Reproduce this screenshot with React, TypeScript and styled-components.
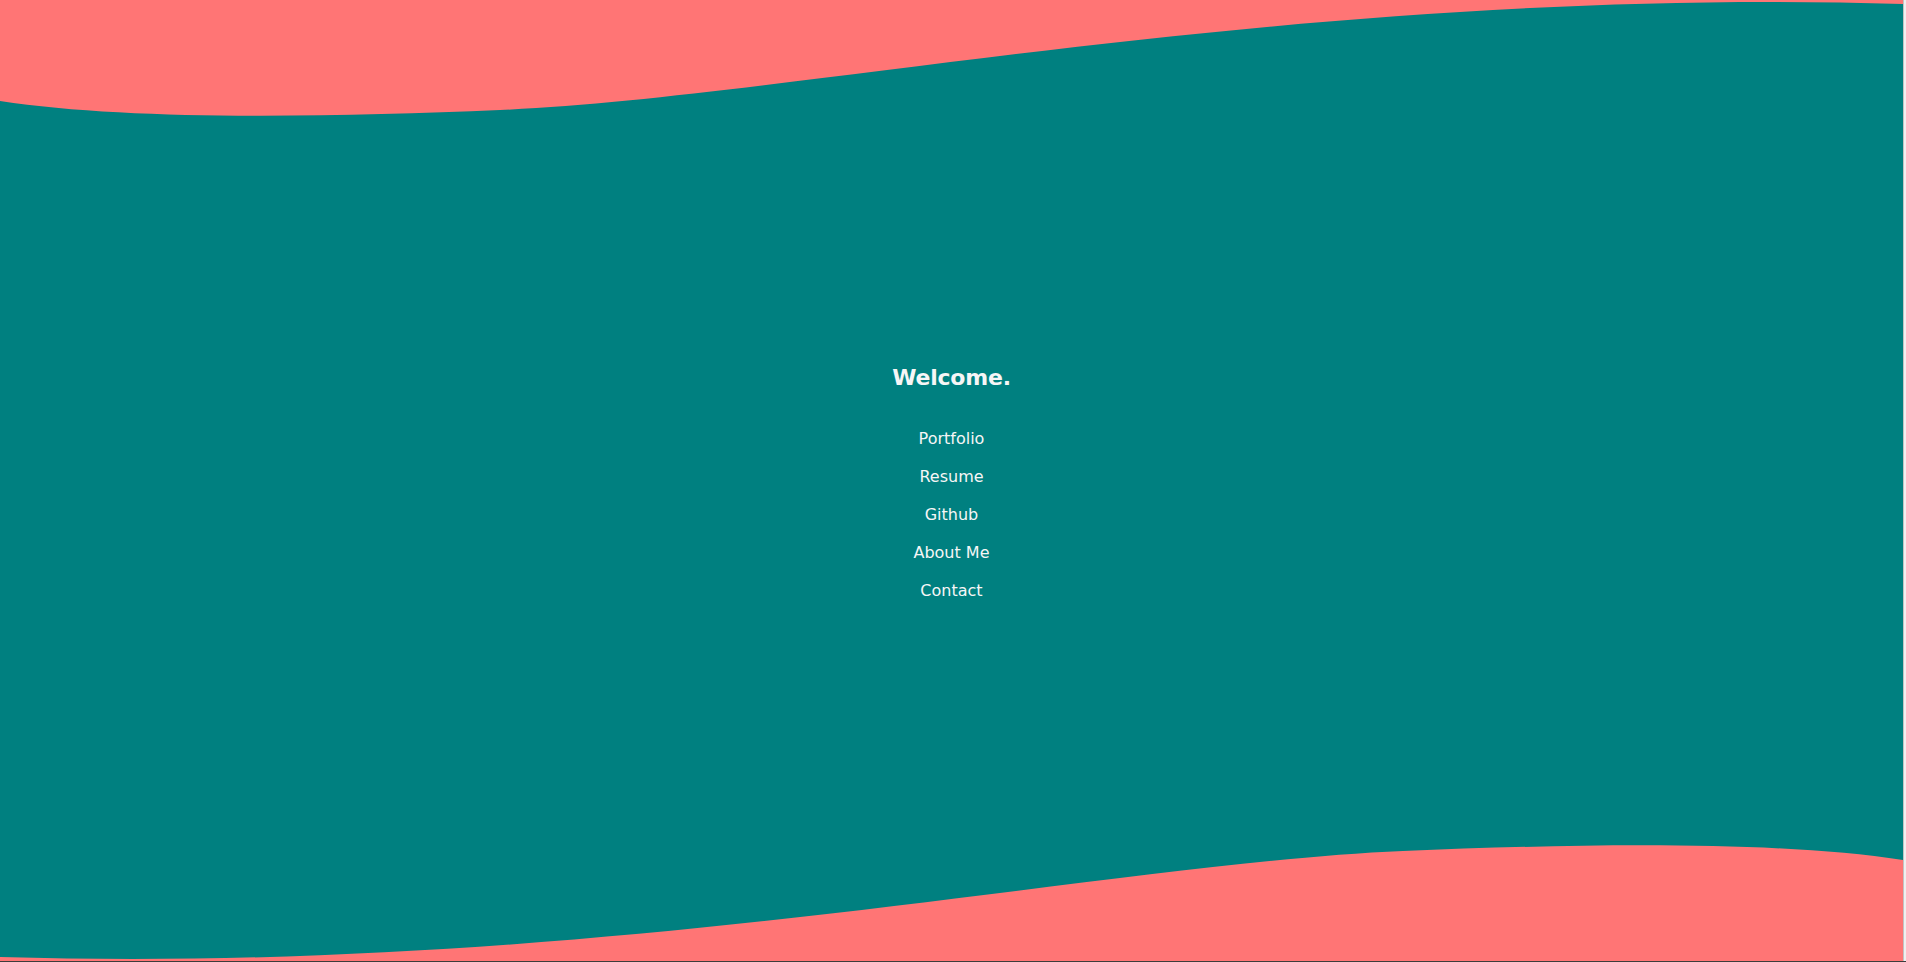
import styled, { createGlobalStyle } from 'styled-components';

const GlobalStyle = createGlobalStyle`
  html, body {
    margin: 0;
    padding: 0;
    height: 100%;
    background: #3c3c3c;
  }
  #root {
    height: 100%;
  }
`;

const colors = {
  teal: '#008080',
  coral: '#ff7575',
  text: '#f6f6f6'
};

const Frame = styled.div`
  display: flex;
  height: calc(100vh - 1px);
  overflow: hidden;
`;

const Page = styled.main`
  flex: 1;
  display: flex;
  flex-direction: column;
  background: ${colors.teal};
  min-width: 0;
`;

const Gutter = styled.div`
  width: 2px;
  background: #f0f0f0;
  border-left: 1px solid #c2c2c2;
`;

const Wave = styled.svg<{ $flip?: boolean }>`
  display: block;
  width: 100%;
  height: 120px;
  flex-shrink: 0;
  transform: ${props => (props.$flip ? 'rotate(180deg)' : 'none')};
  path {
    fill: ${colors.coral};
  }
`;

const Center = styled.section`
  flex: 1;
  display: flex;
  flex-direction: column;
  align-items: center;
  justify-content: center;
  padding-top: 11px;
  font-family: 'DejaVu Sans', 'Liberation Sans', sans-serif;
  color: ${colors.text};
`;

const Title = styled.h1`
  margin: 0 0 27px;
  font-size: 22px;
  line-height: 30px;
  font-weight: 700;
  letter-spacing: -0.2px;
`;

const Menu = styled.ul`
  list-style: none;
  margin: 0;
  padding: 0;
  text-align: center;
  li a {
    display: block;
    padding: 7px 0;
    font-size: 16px;
    line-height: 24px;
    color: ${colors.text};
    text-decoration: none;
  }
`;

// same curve is used top and bottom, the bottom one turned round
const wavePath =
  'M0,101 C130,121 330,117 500,110 C800,97.6 1300,-14 1903,4 V0 H0 Z';

const links = ['Portfolio', 'Resume', 'Github', 'About Me', 'Contact'];

const WaveShape = ({ flip }: { flip?: boolean }): JSX.Element => (
  <Wave $flip={flip} viewBox="0 0 1903 120" preserveAspectRatio="none">
    <path d={wavePath} />
  </Wave>
);

const App = (): JSX.Element => (
  <>
    <GlobalStyle />
    <Frame>
      <Page>
        <WaveShape />
        <Center>
          <Title>Welcome.</Title>
          <Menu>
            {links.map(label => (
              <li key={label}>
                <a href="#">{label}</a>
              </li>
            ))}
          </Menu>
        </Center>
        <WaveShape flip />
      </Page>
      <Gutter />
    </Frame>
  </>
);

export default App;
